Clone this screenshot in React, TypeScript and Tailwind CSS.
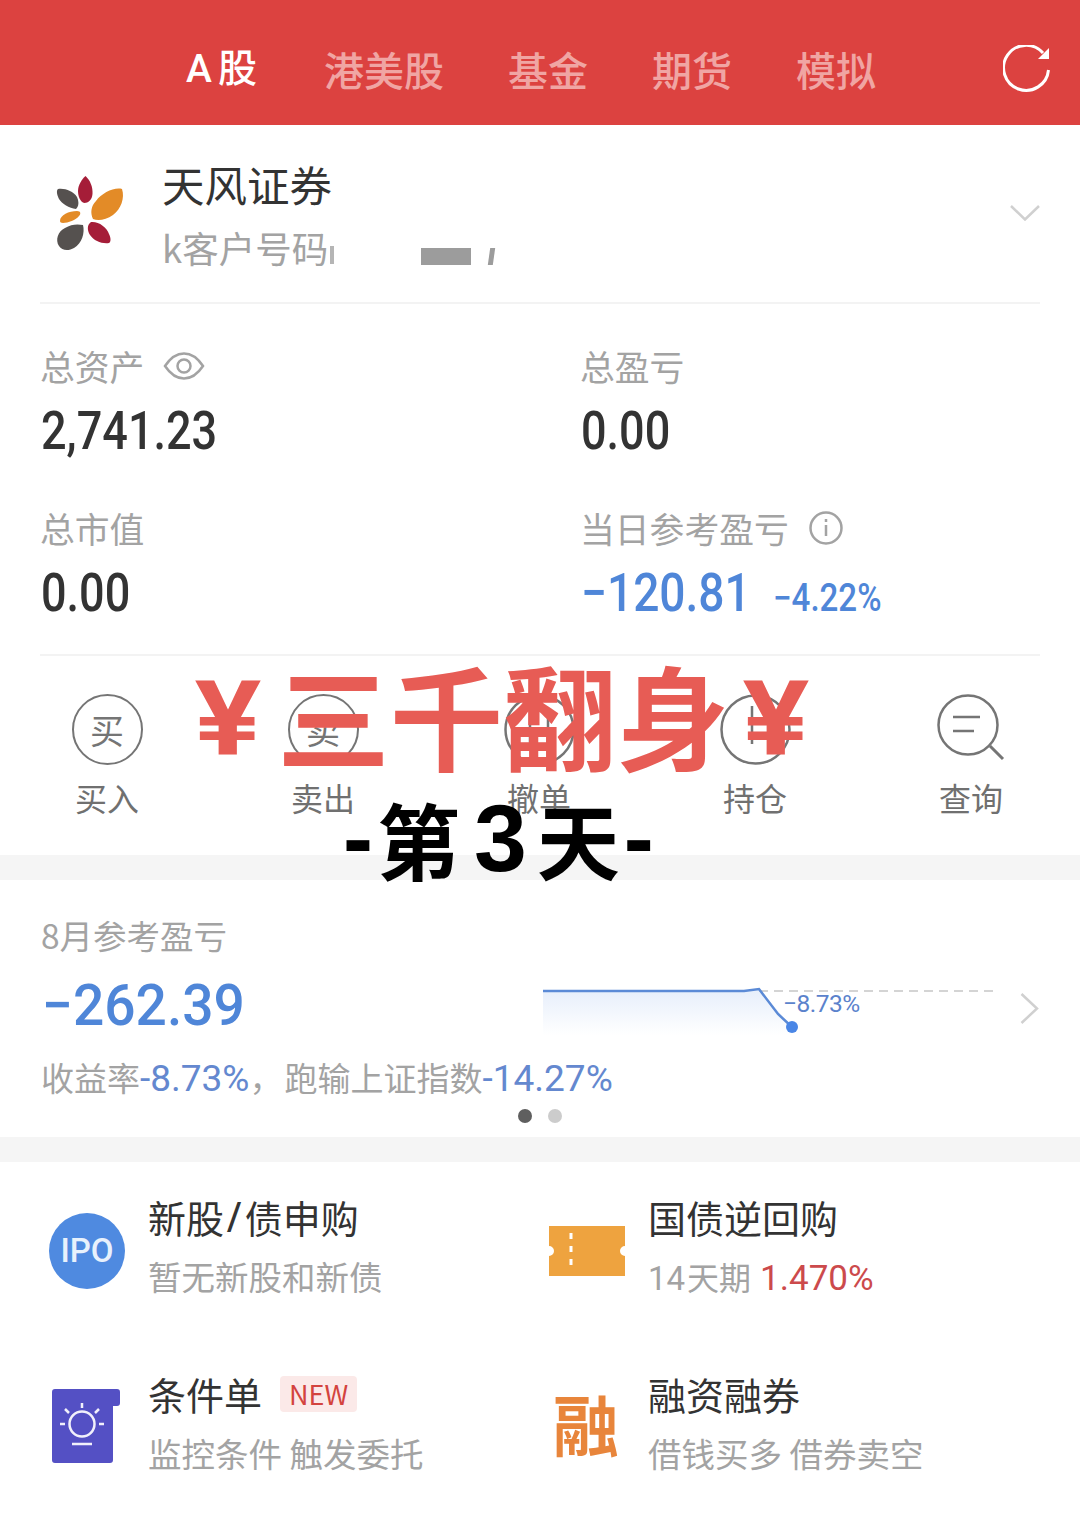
const tabs = ["港美股", "基金", "期货", "模拟"];

const Eye = () => (
  <svg width="42" height="30" viewBox="0 0 42 30" fill="none" stroke="#a3a3a3" strokeWidth="2.5">
    <path d="M2 15C8 6 14 2.500 21 2.500S34 6 40 15C34 24 28 27.500 21 27.500S8 24 2 15Z" />
    <circle cx="21" cy="15" r="6.500" />
  </svg>
);

const Info = () => (
  <svg width="36" height="36" viewBox="0 0 36 36" fill="none" stroke="#a3a3a3" strokeWidth="2.500">
    <circle cx="18" cy="18" r="15.500" />
    <path d="M18 15v11" />
    <path d="M18 9v3" />
  </svg>
);

const Logo = () => (
  <svg width="70" height="78" viewBox="55 174 70 78" className="shrink-0">
    <path fill="#a51d38" d="M85.500 176C90 180 93 187 92.500 194C92 200 88 203 84.500 203C80 202 78 196 78 191C78 185 82 179 85.500 176Z" />
    <path fill="#55514f" d="M58 189C65 188 73 191 77 197C79 202 79 206 76 209C69 208 62 204 59 199C57 195 56 191 58 189Z" />
    <path fill="#e38b27" d="M122 189C125 198 121 209 113 215C106 220 98 221 93 219C90 213 91 206 96 201C102 193 114 187 122 189Z" />
    <path fill="#e38b27" d="M60 221C60 215 69 211 77 211C81 211 81 214 79 216C76 220 68 223 63 223C61 223 60 222 60 221Z" />
    <path fill="#55514f" d="M83 225C85 233 82 243 74 248C69 251 62 251 59 246C55 240 58 231 65 228C71 224 78 224 83 225Z" />
    <path fill="#a51d38" d="M91 222C98 221 107 227 109 234C111 238 111 242 109 243C102 244 94 241 90 235C87 230 87 225 91 222Z" />
  </svg>
);

const Stat = ({ label, icon, children }: { label: string; icon?: React.ReactNode; children: React.ReactNode }) => (
  <div className="h-[162px]">
    <div className="flex h-[40px] items-center gap-[19px] text-[34.800px] leading-[40px] text-[#a3a3a3]">
      {label}
      {icon}
    </div>
    <div className="mt-[23px] flex h-[44px] items-baseline whitespace-nowrap pl-[1px] font-['Roboto','Noto_Sans_CJK_SC',sans-serif] text-[#333]">
      {children}
    </div>
  </div>
);

const Num = ({ children }: { children: React.ReactNode }) => (
  <span className="inline-block origin-left scale-x-[0.85] text-[53px] font-medium leading-[44px]">{children}</span>
);

const Action = ({ label, char, children }: { label: string; char?: string; children?: React.ReactNode }) => (
  <div className="flex w-[216px] flex-col items-center">
    {char ? (
      <div className="flex h-[71px] w-[71px] items-center justify-center rounded-full border-[2.500px] border-[#757575] text-[34px] leading-none text-[#757575]">
        {char}
      </div>
    ) : (
      children
    )}
    <div className="mt-[13px] text-[32px] leading-[38px] text-[#707070]">{label}</div>
  </div>
);

const Feature = ({
  icon,
  title,
  sub,
  badge,
  col,
  inset,
}: {
  icon: React.ReactNode;
  title: React.ReactNode;
  sub: React.ReactNode;
  badge?: boolean;
  col: string;
  inset: string;
}) => (
  <div className="flex h-[177px] w-[540px] items-start">
    <div className={`flex h-[100px] shrink-0 items-center ${col} ${inset}`}>{icon}</div>
    <div>
      <div className="flex items-center text-[38px] leading-[44px] text-[#333]">
        {title}
        {badge && (
          <span className="ml-[18px] rounded-[4px] bg-[#fbe9e8] px-[9px] text-[27px] leading-[36px] text-[#d3433e]">NEW</span>
        )}
      </div>
      <div className="mt-[17px] flex items-baseline text-[33.500px] leading-[40px] text-[#a3a3a3]">{sub}</div>
    </div>
  </div>
);

export default function App() {
  return (
    <div className="relative h-[1513px] w-[1080px] overflow-hidden bg-white font-['Noto_Sans_CJK_SC',sans-serif]">
      {/* top tabs */}
      <header className="flex h-[125px] items-center bg-[#dc4240] pl-[186px] pt-[12px]">
        <div className="flex w-[71px] items-center font-['Roboto','Noto_Sans_CJK_SC',sans-serif] text-[39px] font-medium leading-[44px] text-white">
          A<span className="ml-[6px]">股</span>
        </div>
        <div className="ml-[67px] flex gap-[64px] text-[40px] font-medium leading-[44px] text-[#f0a5a3]">
          {tabs.map((t) => (
            <span key={t}>{t}</span>
          ))}
        </div>
        <svg className="ml-auto mr-[30px]" width="47" height="48" viewBox="0 0 47 48" fill="none" stroke="white" strokeWidth="3">
          <path d="M40 8A22.500 22.500 0 1 0 45.500 25" />
          <path d="M46 3V14H35Z" fill="white" stroke="none" />
        </svg>
      </header>

      {/* account */}
      <div className="mx-[40px] flex h-[179px] items-center border-b-2 border-[#f3f3f3] pb-[2px] pl-[15px]">
        <Logo />
        <div className="ml-[37px]">
          <div className="text-[42.500px] leading-[50px] text-[#333]">天风证券</div>
          <div className="mt-[20px] flex h-[38px] items-center text-[36.500px] leading-[38px] text-[#a3a3a3]">
            k客户号码
            <span className="ml-[2px] mt-[14px] h-[18px] w-[4px] bg-[#b5b5b5]" />
            <span className="ml-[87px] mt-[18px] h-[17px] w-[50px] bg-[#9c9c9c]" />
            <span className="ml-[18px] mt-[18px] h-[17px] w-[5px] skew-x-[-8deg] bg-[#9c9c9c]" />
          </div>
        </div>
        <svg className="ml-auto" width="30" height="16" viewBox="0 0 30 16" fill="none" stroke="#d0d0d0" strokeWidth="2.500">
          <path d="M1 1L15 14.500L29 1" />
        </svg>
      </div>

      {/* balances */}
      <div className="mx-[40px] grid h-[352px] grid-cols-[540px_1fr] border-b-2 border-[#f3f3f3] pt-[42px]">
        <Stat label="总资产" icon={<Eye />}>
          <Num>2,741.23</Num>
        </Stat>
        <Stat label="总盈亏">
          <Num>0.00</Num>
        </Stat>
        <Stat label="总市值">
          <Num>0.00</Num>
        </Stat>
        <Stat label="当日参考盈亏" icon={<Info />}>
          <span className="inline-block w-[192px] origin-left scale-x-[0.87] text-[53px] font-medium leading-[44px] text-[#4f86d8]">−120.81</span>
          <span className="inline-block origin-left scale-x-[0.87] text-[38px] font-medium leading-[44px] text-[#4f86d8]">−4.22%</span>
        </Stat>
      </div>

      {/* trade actions */}
      <div className="-ml-[1px] flex h-[199px] pt-[38px]">
        <Action label="买入" char="买" />
        <Action label="卖出" char="卖" />
        <Action label="撤单">
          <svg width="71" height="71" viewBox="0 0 71 71" fill="none" stroke="#757575" strokeWidth="2.500">
            <circle cx="35.500" cy="35.500" r="34" />
            <path d="M26 18V50M44 18V50" />
          </svg>
        </Action>
        <Action label="持仓">
          <svg width="71" height="71" viewBox="0 0 71 71" fill="none" stroke="#757575" strokeWidth="2.500">
            <circle cx="35.500" cy="35.500" r="34" />
            <path d="M32 12V50M60 36V50" />
          </svg>
        </Action>
        <Action label="查询">
          <svg width="71" height="71" viewBox="0 0 71 71" fill="none" stroke="#757575" strokeWidth="2.500">
            <circle cx="32" cy="31" r="29.500" />
            <path d="M17 23H44M17 37H38" strokeWidth="2.500" />
            <path d="M54 52L67 65" strokeWidth="3" />
          </svg>
        </Action>
      </div>
      <div className="h-[25px] bg-[#f5f5f5]" />

      {/* monthly */}
      <section className="relative h-[257px] pl-[41px]">
        <div className="pt-[35px] text-[33.500px] leading-[40px] text-[#a3a3a3]">8月参考盈亏</div>
        <div className="mt-[22px] h-[56px] origin-left scale-x-[0.95] pl-[1px] font-['Roboto',sans-serif] text-[58px] font-medium leading-[56px] text-[#4f86d8]">−262.39</div>
        <div className="mt-[24px] text-[33px] leading-[40px] text-[#a3a3a3]">
          收益率<span className="font-['Roboto',sans-serif] text-[37px] text-[#6488cf]">-8.73%</span>，<span className="ml-[2px]">跑输上证指数</span><span className="font-['Roboto',sans-serif] text-[37px] text-[#6488cf]">-14.27%</span>
        </div>
        <div className="absolute left-[518px] top-[229px] flex gap-[16px]">
          <span className="h-[14px] w-[14px] rounded-full bg-[#5f5f5f]" />
          <span className="h-[14px] w-[14px] rounded-full bg-[#cccccc]" />
        </div>
        <svg className="absolute left-[543px] top-[105px]" width="455" height="50" viewBox="0 0 455 50" fill="none">
          <defs>
            <linearGradient id="fade" x1="0" y1="0" x2="0" y2="1">
              <stop offset="0" stopColor="#e6eefb" />
              <stop offset="1" stopColor="#ffffff" />
            </linearGradient>
          </defs>
          <path d="M0 6H201L216 4L249 42V50H0Z" fill="url(#fade)" />
          <path d="M216 6H450" stroke="#d4d4d4" strokeWidth="2" strokeDasharray="9 6" />
          <path d="M0 6H201L216 4L235 29L249 42" stroke="#5b8ad6" strokeWidth="2.500" />
          <circle cx="249" cy="42" r="6" fill="#4a86e6" />
        </svg>
        <span className="absolute left-[783px] top-[108px] font-['Roboto',sans-serif] text-[24.500px] leading-[32px] tracking-[-0.500px] text-[#5b82cc]">−8.73%</span>
        <svg className="absolute left-[1020px] top-[113px]" width="19" height="31" viewBox="0 0 19 31" fill="none" stroke="#d0d0d0" strokeWidth="2.500">
          <path d="M1.500 1L17 15.500L1.500 30" />
        </svg>
      </section>
      <div className="h-[25px] bg-[#f5f5f5]" />

      {/* feature entries */}
      <div className="flex flex-wrap pt-[33px]">
        <Feature
          col="w-[148px]"
          inset="pl-[49px] pt-[12px]"
          title={
            <>
              新股
              <span className="mx-[3px] font-['Roboto',sans-serif] text-[38px] font-medium">/</span>
              债申购
            </>
          }
          sub="暂无新股和新债"
          icon={
            <div className="flex h-[76px] w-[76px] items-center justify-center rounded-full bg-[#4f8ae0] font-['Roboto',sans-serif] text-[33px] font-medium text-[#e8f1fc]">IPO</div>
          }
        />
        <Feature
          col="w-[108px]"
          inset="pl-[9px] pt-[12px]"
          title="国债逆回购"
          sub={
            <>
              <span className="font-['Roboto',sans-serif] text-[33px]">14</span>
              <span className="ml-[2px] text-[32px]">天期</span>
              <span className="ml-[9px] font-['Roboto',sans-serif] text-[35px] text-[#cc4a4c]">1.470%</span>
            </>
          }
          icon={
            <svg width="76" height="50" viewBox="0 0 76 50">
              <path fill="#eea33f" d="M0 0H76V20A5 5 0 0 0 76 30V50H0V30A5 5 0 0 0 0 20Z" />
              <path d="M22 7V43" stroke="#fff" strokeWidth="3" strokeDasharray="6 7" />
            </svg>
          }
        />
        <Feature
          col="w-[148px]"
          inset="pl-[52px] pt-[8px]"
          title="条件单"
          badge
          sub="监控条件 触发委托"
          icon={
            <svg width="68" height="74" viewBox="0 0 68 74" fill="none" stroke="#f1f0fb" strokeWidth="2.500">
              <path fill="#5450c4" stroke="none" d="M3 0H65Q68 0 68 3V14Q68 17 65 17H61V71Q61 74 58 74H3Q0 74 0 71V3Q0 0 3 0Z" />
              <circle cx="30" cy="35" r="12.500" />
              <path d="M30 14V19M13 20L17 24M47 20L43 24M8 35H13M47 35H52M20 55H40" />
            </svg>
          }
        />
        <Feature
          col="w-[108px]"
          inset="pl-[13px] pt-[0px]"
          title="融资融券"
          sub="借钱买多 借券卖空"
          icon={<span className="text-[66px] font-bold leading-[70px] text-[#e8853b]">融</span>}
        />
      </div>

      {/* promo text laid over the screenshot */}
      <div className="absolute left-[193px] top-[642px] flex items-center whitespace-nowrap text-[113px] font-bold leading-[130px] text-[#e75c55]">
        <span className="mt-[12px] w-[70px] scale-x-[1.2] text-center font-['Roboto',sans-serif] text-[104px] font-bold">¥</span>
        <span className="ml-[14px]">三千翻身</span>
        <span className="ml-[12px] mt-[12px] w-[70px] scale-x-[1.2] text-center font-['Roboto',sans-serif] text-[104px] font-bold">¥</span>
      </div>
      <div className="absolute left-[343px] top-[786px] flex items-center whitespace-nowrap text-[83px] font-bold leading-[104px] text-black">
        <span className="font-['Liberation_Sans',sans-serif] text-[90px]">-</span>
        <span className="ml-[4px]">第</span>
        <span className="ml-[14px] font-['Liberation_Sans',sans-serif] text-[95px]">3</span>
        <span className="ml-[10px]">天</span>
        <span className="ml-[4px] font-['Liberation_Sans',sans-serif] text-[90px]">-</span>
      </div>
    </div>
  );
}
